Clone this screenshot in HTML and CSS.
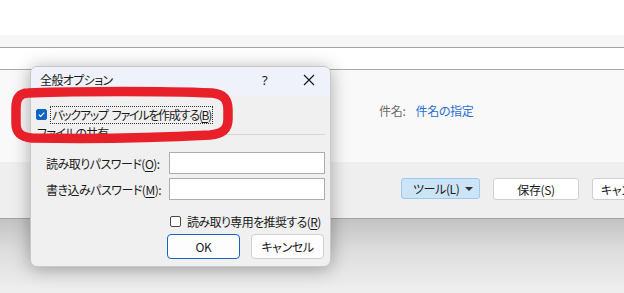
FILE: index.html
```html
<!DOCTYPE html>
<html lang="ja">
<head>
<meta charset="utf-8">
<title>全般オプション</title>
<link rel="stylesheet" href="styles.css">
</head>
<body>
<div class="page">
  <div class="top"></div>
  <div class="band"></div>
  <div class="strip"></div>
  <div class="content">
    <div class="subject">
      <span class="subject-label">件名:</span>
      <span class="subject-link">件名の指定</span>
    </div>
  </div>
  <div class="footer">
    <div class="btn tools"><span>ツール(L)</span><span class="caret"></span></div>
    <div class="btn save">保存(S)</div>
    <div class="btn cancel-bg">キャンセル</div>
  </div>
  <div class="desk"></div>

  <div class="dialog">
    <div class="titlebar">
      <span class="title">全般オプション</span>
      <span class="help">?</span>
      <svg class="close" width="12" height="12" viewBox="0 0 12 12"><path d="M1 1 L11 11 M11 1 L1 11" stroke="#1a1a1a" stroke-width="1.2" fill="none"/></svg>
    </div>
    <div class="body">
      <div class="row-backup">
        <span class="check checked"><svg width="11" height="11" viewBox="0 0 11 11"><path d="M2.8 5.6 L4.6 7.4 L8.3 3.6" stroke="#fff" stroke-width="1.1" fill="none"/></svg></span>
        <span class="focus"><span class="word">バックアップ</span>ファイルを作成する(<u>B</u>)</span>
      </div>
      <div class="group">ファイルの共有</div>
      <div class="field first">
        <span class="label">読み取りパスワード(<u>O</u>):</span>
        <span class="input"></span>
      </div>
      <div class="field">
        <span class="label">書き込みパスワード(<u>M</u>):</span>
        <span class="input"></span>
      </div>
      <div class="row-readonly">
        <span class="check"></span>
        <span class="ro-text">読み取り専用を推奨する(<u>R</u>)</span>
      </div>
      <div class="actions">
        <div class="dbtn ok">OK</div>
        <div class="dbtn">キャンセル</div>
      </div>
    </div>
  </div>

  <svg class="marker" width="240" height="70" viewBox="0 0 240 70">
    <path d="M24 7 C80 5 160 5 208 7 C220 8 224 14 224 24 L224 33 C224 44 218 48 206 49 C150 52 80 53 28 52 C16 51 12 46 12 37 L12 22 C12 12 16 7 24 7 Z" fill="none" stroke="#e8202a" stroke-width="9.5"/>
  </svg>
</div>
</body>
</html>
```
FILE: styles.css
```css
* { box-sizing: border-box; }
html, body { margin: 0; padding: 0; }
body {
  background: #fff;
  font-family: "Noto Sans CJK JP", "Noto Sans", sans-serif;
  font-size: 12px;
  color: #1a1a1a;
  font-feature-settings: "palt";
  white-space: nowrap;
}
.page {
  position: relative;
  width: 624px;
  height: 293px;
  overflow: hidden;
  display: flex;
  flex-direction: column;
}
.top { height: 35px; background: #fff; }
.band { height: 13px; background: #f6f6f6; border-bottom: 1px solid #a3a3a3; }
.strip { height: 22px; background: #fff; border-bottom: 1px solid #ababab; }
.content {
  height: 92px;
  background: #f9f9f9;
  padding: 33px 0 0 379px;
}
.subject { display: flex; gap: 10px; line-height: 16px; letter-spacing: -0.3px; }
.subject-label { color: #6b6b6b; }
.subject-link { color: #2a6fcf; }
.footer {
  height: 57px;
  background: #efefef;
  border-bottom: 1px solid #a4a4a4;
  display: flex;
  align-items: flex-start;
  padding: 16px 0 0 401px;
  gap: 13px;
  overflow: hidden;
}
.btn {
  height: 22px;
  border: 1px solid #cfcfcf;
  border-radius: 3px;
  background: #fff;
  display: flex;
  align-items: center;
  justify-content: center;
  color: #1a1a1a;
  flex-shrink: 0;
  letter-spacing: -0.4px;
}
.tools {
  width: 79px;
  height: 21px;
  background: #cce4f7;
  border-color: #9ccaf0;
  justify-content: space-between;
  padding: 0 6px 0 11px;
}
.caret {
  width: 0; height: 0;
  border-left: 4px solid transparent;
  border-right: 4px solid transparent;
  border-top: 4px solid #333;
}
.save { width: 86px; }
.cancel-bg { width: 86px; justify-content: flex-start; padding-left: 8px; }
.desk {
  flex: 1;
  background: linear-gradient(#c3c3c3, #dedede 45%, #efefef);
}

.dialog {
  position: absolute;
  left: 30px;
  top: 66px;
  width: 301px;
  height: 201px;
  background: #f0f0f0;
  border: 1px solid #c8c8c8;
  border-radius: 7px;
  box-shadow: 0 2px 18px rgba(0, 0, 0, 0.32);
  overflow: hidden;
  display: flex;
  flex-direction: column;
}
.titlebar {
  height: 29px;
  background: #eff2fa;
  display: flex;
  align-items: center;
  padding: 0 0 3px 9px;
  flex-shrink: 0;
}
.title { flex: 1; line-height: 14px; letter-spacing: -0.6px; }
.help { width: 10px; margin-right: 31px; font-family: "Noto Sans", sans-serif; font-size: 13px; }
.close { margin-right: 15px; }

.body {
  display: flex;
  flex-direction: column;
  padding: 0 5px 0 5px;
}
.row-backup {
  margin-top: 10px;
  height: 17px;
  display: flex;
  align-items: center;
  gap: 4px;
}
.check {
  width: 11px;
  height: 11px;
  border: 1px solid #555;
  border-radius: 2px;
  background: #fff;
  display: inline-flex;
  flex-shrink: 0;
}
.check.checked { background: #1064c4; border-color: #1064c4; }
.check svg { margin: -1px; }
.focus {
  outline: 1px dotted #333;
  padding: 0 1px;
  line-height: 16px;
  letter-spacing: -1.25px;
}
.word { margin-right: 4px; }
.group {
  height: 16px;
  display: flex;
  align-items: flex-end;
  line-height: 13px;
  color: #1a1a1a;
  gap: 4px;
  padding-left: 1px;
  letter-spacing: -0.8px;
}
.group::after {
  content: "";
  flex: 1;
  border-top: 1px solid #d6d6d6;
  margin-bottom: 4px;
}
.field {
  display: flex;
  align-items: center;
  margin-top: 4px;
}
.field.first { margin-top: 13px; }
.label { width: 133px; padding-left: 10px; letter-spacing: -0.5px; }
.input {
  width: 157px;
  height: 22px;
  background: #fff;
  border: 1px solid #adadad;
}
.row-readonly {
  margin-top: 13px;
  height: 16px;
  display: flex;
  align-items: center;
  gap: 6px;
  padding-left: 134px;
}
.ro-text { letter-spacing: -0.6px; }
.row-readonly .check { border-radius: 2px; border-color: #4a4a4a; }
.actions {
  margin-top: 5px;
  display: flex;
  justify-content: flex-end;
  gap: 11px;
  padding-right: 1px;
}
.dbtn {
  width: 73px;
  height: 25px;
  border: 1px solid #d0d0d0;
  border-radius: 4px;
  background: #fdfdfd;
  display: flex;
  align-items: center;
  justify-content: center;
  letter-spacing: -0.4px;
}
.dbtn.ok { border-color: #1465c0; }

.marker {
  position: absolute;
  left: 4px;
  top: 86px;
}
u { text-decoration-thickness: 1px; text-underline-offset: 2px; }
```
